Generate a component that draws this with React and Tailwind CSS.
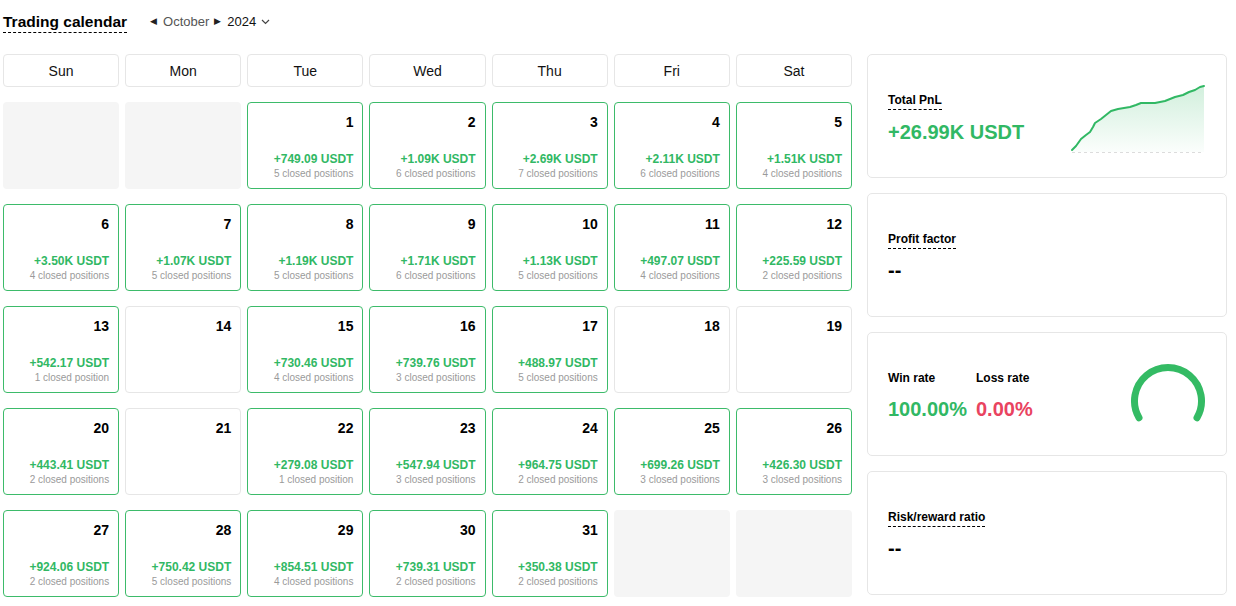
import React from "react";

const GREEN = "text-[#31b864]";

const weekdays = ["Sun", "Mon", "Tue", "Wed", "Thu", "Fri", "Sat"];

// null = outside month, [day] = no trades, [day, pnl, closed] = traded
const days = [
  null, null,
  [1, "+749.09", 5], [2, "+1.09K", 6], [3, "+2.69K", 7], [4, "+2.11K", 6], [5, "+1.51K", 4],
  [6, "+3.50K", 4], [7, "+1.07K", 5], [8, "+1.19K", 5], [9, "+1.71K", 6], [10, "+1.13K", 5], [11, "+497.07", 4], [12, "+225.59", 2],
  [13, "+542.17", 1], [14], [15, "+730.46", 4], [16, "+739.76", 3], [17, "+488.97", 5], [18], [19],
  [20, "+443.41", 2], [21], [22, "+279.08", 1], [23, "+547.94", 3], [24, "+964.75", 2], [25, "+699.26", 3], [26, "+426.30", 3],
  [27, "+924.06", 2], [28, "+750.42", 5], [29, "+854.51", 4], [30, "+739.31", 2], [31, "+350.38", 2],
  null, null,
];

function DayCell({ d }) {
  if (!d) return <div className="h-[87px] rounded-[4px] bg-[#f5f5f5]" />;
  const [day, pnl, closed] = d;
  if (!pnl) {
    return (
      <div className="h-[87px] rounded-[4px] border border-[#e6e6e6] bg-white flex flex-col items-end pt-[9px] pr-[9px]">
        <span className="text-[14px] leading-[20px] font-bold text-black">{day}</span>
      </div>
    );
  }
  return (
    <div className="h-[87px] rounded-[4px] border border-[#3dbb6a] bg-white flex flex-col items-end justify-between pt-[9px] pb-[7px] pr-[9px]">
      <span className="text-[14px] leading-[20px] font-bold text-black">{day}</span>
      <div className="flex flex-col items-end">
        <span className={`text-[12px] leading-[16px] font-bold ${GREEN}`}>{pnl} USDT</span>
        <span className="text-[10px] leading-[14px] text-[#9a9a9a]">
          {closed} closed position{closed === 1 ? "" : "s"}
        </span>
      </div>
    </div>
  );
}

function Dashed({ children }) {
  return (
    <span className="inline-block self-start text-[12px] leading-[15px] font-bold text-black border-b border-dashed border-black pb-[1px]">
      {children}
    </span>
  );
}

function PnlChart() {
  const pts = "2,66 6,62 11,55 16,51 20,48 23,43 25,39 31,35 36,31 41,27 48,25 54,24 60,23 66,21 71,19 78,19 85,19 90,18 95,17 100,15 105,13 113,11 119,8 125,6 130,3 134,2";
  return (
    <svg width="136" height="70" viewBox="0 0 136 70">
      <defs>
        <linearGradient id="pnlFill" x1="0" y1="0" x2="0" y2="1">
          <stop offset="0%" stopColor="#31b864" stopOpacity="0.22" />
          <stop offset="100%" stopColor="#31b864" stopOpacity="0.02" />
        </linearGradient>
      </defs>
      <polygon points={`${pts} 134,68 2,68`} fill="url(#pnlFill)" />
      <line x1="2" y1="68.5" x2="134" y2="68.5" stroke="#dcdcdc" strokeDasharray="3 3" />
      <polyline points={pts} fill="none" stroke="#31b864" strokeWidth="2" strokeLinejoin="round" strokeLinecap="round" />
    </svg>
  );
}

function Gauge() {
  // 240deg arc, centre (38,38), r 33.5
  return (
    <svg width="76" height="62" viewBox="0 0 76 62">
      <path
        d="M9 54.75 A33.5 33.5 0 1 1 67 54.75"
        fill="none"
        stroke="#34bb64"
        strokeWidth="7"
        strokeLinecap="round"
      />
    </svg>
  );
}

function Card({ children, className = "" }) {
  return (
    <div className={`h-[124px] rounded-[5px] border border-[#e6e6e6] bg-white px-5 flex items-center ${className}`}>
      {children}
    </div>
  );
}

export default function App() {
  return (
    <div className="min-h-screen bg-white pl-[3px] pt-[9px] font-['Liberation_Sans',Arial,sans-serif] text-black">
      {/* Header */}
      <div className="flex items-center h-[26px]">
        <h1 className="text-[15.5px] leading-[20px] font-bold border-b border-dashed border-black">Trading calendar</h1>
        <div className="flex items-center ml-[23px] text-[13px]">
          <span className="text-[9px] text-[#222]">◀</span>
          <span className="ml-[6px] text-[#555]">October</span>
          <span className="ml-[5px] text-[9px] text-[#222]">▶</span>
          <span className="ml-[6px] text-[#111]">2024</span>
          <svg className="ml-[5px]" width="9" height="6" viewBox="0 0 9 6">
            <path d="M1 1l3.5 3.5L8 1" fill="none" stroke="#444" strokeWidth="1.2" />
          </svg>
        </div>
      </div>

      <div className="flex gap-[15px] mt-[19px]">
        {/* Calendar */}
        <div className="w-[849px] grid grid-cols-7 gap-x-[6px] gap-y-[15px]">
          {weekdays.map((w) => (
            <div key={w} className="h-[33px] rounded-[4px] border border-[#e6e6e6] flex items-center justify-center pt-[2px] text-[14px] text-[#111]">
              {w}
            </div>
          ))}
          {days.map((d, i) => (
            <DayCell key={i} d={d} />
          ))}
        </div>

        {/* Stats */}
        <div className="w-[360px] flex flex-col gap-[15px]">
          <Card className="justify-between">
            <div className="flex flex-col gap-[10px] pt-[5px]">
              <Dashed>Total PnL</Dashed>
              <span className={`text-[20px] leading-[24px] font-bold ${GREEN}`}>+26.99K USDT</span>
            </div>
            <div className="mt-[6px]">
              <PnlChart />
            </div>
          </Card>

          <Card>
            <div className="flex flex-col gap-[9px] pt-[4px]">
              <Dashed>Profit factor</Dashed>
              <span className="text-[20px] leading-[24px] font-bold">--</span>
            </div>
          </Card>

          <Card className="justify-between">
            <div className="flex pt-[4px]">
              <div className="flex flex-col gap-[11px] w-[88px]">
                <span className="text-[12px] leading-[15px] font-bold">Win rate</span>
                <span className={`text-[20px] leading-[24px] font-bold ${GREEN}`}>100.00%</span>
              </div>
              <div className="flex flex-col gap-[11px]">
                <span className="text-[12px] leading-[15px] font-bold">Loss rate</span>
                <span className="text-[20px] leading-[24px] font-bold text-[#e9435f]">0.00%</span>
              </div>
            </div>
            <div className="pb-[1px]">
              <Gauge />
            </div>
          </Card>

          <Card>
            <div className="flex flex-col gap-[9px] pt-[4px]">
              <Dashed>Risk/reward ratio</Dashed>
              <span className="text-[20px] leading-[24px] font-bold">--</span>
            </div>
          </Card>
        </div>
      </div>
    </div>
  );
}
